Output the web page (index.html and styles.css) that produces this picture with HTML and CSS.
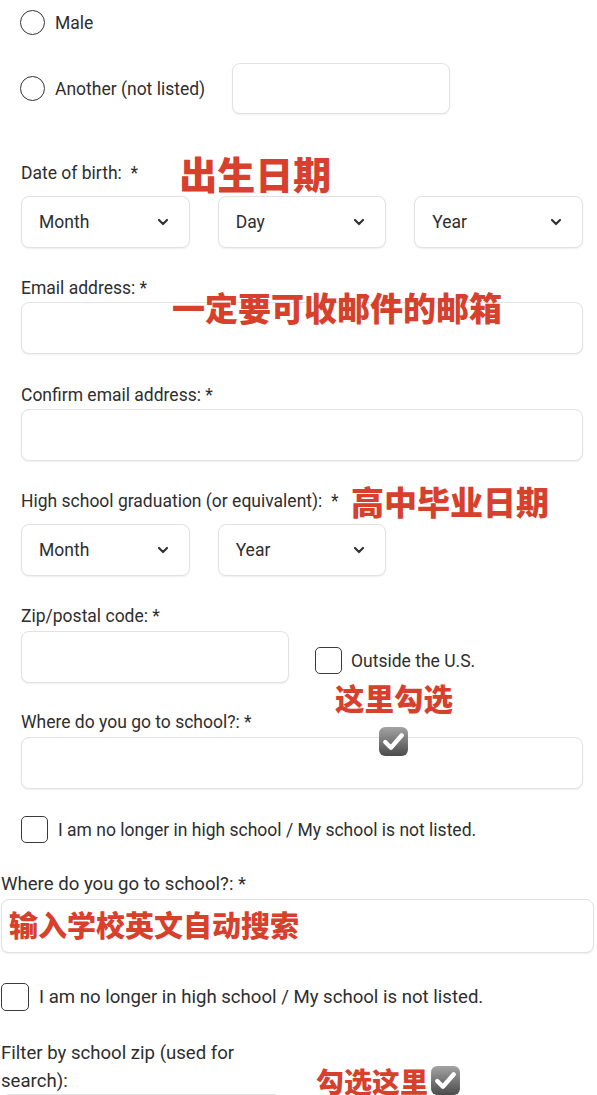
FILE: index.html
```html
<!DOCTYPE html>
<html lang="en">
<head>
  <meta charset="UTF-8" />
  <title>Student Sign Up</title>
  <link rel="stylesheet" href="styles.css">
</head>
<body>
  <!-- Top part of the form -->
  <div class="form">
    <div class="radio-row">
      <span class="radio"></span>
      <span>Male</span>
    </div>
    <div class="radio-row other">
      <span class="radio"></span>
      <span>Another (not listed)</span>
      <div class="box other-input"></div>
    </div>

    <div class="label tall">Date of birth:&nbsp; * <span class="note note-dob">出生日期</span></div>
    <div class="select-row">
      <div class="box select"><span>Month</span><svg class="chev" viewBox="0 0 12 8"><polyline points="2,2 6,6 10,2" /></svg></div>
      <div class="box select"><span>Day</span><svg class="chev" viewBox="0 0 12 8"><polyline points="2,2 6,6 10,2" /></svg></div>
      <div class="box select"><span>Year</span><svg class="chev" viewBox="0 0 12 8"><polyline points="2,2 6,6 10,2" /></svg></div>
    </div>

    <div class="field email">
      <div class="label">Email address: *</div>
      <span class="note note-email">一定要可收邮件的邮箱</span>
      <div class="box input"></div>
    </div>

    <div class="field confirm">
      <div class="label">Confirm email address: *</div>
      <div class="box input"></div>
    </div>

    <div class="label tall hs">High school graduation (or equivalent):&nbsp; * <span class="note note-hs">高中毕业日期</span></div>
    <div class="select-row">
      <div class="box select"><span>Month</span><svg class="chev" viewBox="0 0 12 8"><polyline points="2,2 6,6 10,2" /></svg></div>
      <div class="box select"><span>Year</span><svg class="chev" viewBox="0 0 12 8"><polyline points="2,2 6,6 10,2" /></svg></div>
    </div>

    <div class="field zip">
      <div class="label">Zip/postal code: *</div>
      <div class="zip-row">
        <div class="box input zip-input"></div>
        <label class="check-row outside"><span class="check"></span><span>Outside the U.S.</span></label>
        <span class="note note-here">这里勾选</span>
      </div>
    </div>

    <div class="field school">
      <div class="label">Where do you go to school?: *</div>
      <svg class="checked checked-school" viewBox="0 0 30 30"><use href="#tick" /></svg>
      <div class="box input"></div>
    </div>

    <label class="check-row not-listed"><span class="check"></span><span>I am no longer in high school / My school is not listed.</span></label>
  </div>

  <!-- Bottom part of the form -->
  <div class="form lower">
    <div class="field">
      <div class="label">Where do you go to school?: *</div>
      <div class="box input search"><span class="note note-search">输入学校英文自动搜索</span></div>
    </div>

    <label class="check-row not-listed"><span class="check"></span><span>I am no longer in high school / My school is not listed.</span></label>

    <div class="field filter">
      <div class="label wrap">Filter by school zip (used for search):</div>
      <div class="note-pick"><span class="note">勾选这里</span><svg class="checked" viewBox="0 0 30 30"><use href="#tick" /></svg></div>
      <div class="box input filter-input"></div>
    </div>
  </div>

  <svg width="0" height="0" class="defs">
    <defs>
      <linearGradient id="grey" x1="0" y1="0" x2="0" y2="1">
        <stop offset="0" stop-color="#a3a3a3" />
        <stop offset="1" stop-color="#4b4b4b" />
      </linearGradient>
      <g id="tick">
        <rect x="1" y="1" width="28" height="28" rx="6" fill="url(#grey)" />
        <path d="M7 15.5 L12.5 21 L23 9" fill="none" stroke="#fff" stroke-width="4.2" stroke-linecap="round" stroke-linejoin="round" />
      </g>
    </defs>
  </svg>
</body>
</html>
```

FILE: styles.css
```css
html, body {
  height: 1095px;
  overflow: hidden;
}

body {
  margin: 0;
  background: #fff;
  color: #2e2e2e;
  font-family: Roboto, "Liberation Sans", sans-serif;
  font-size: 17.5px;
}

.form {
  padding: 0 14px 0 21px;
}

.box {
  box-sizing: border-box;
  border: 1px solid #e2e2e2;
  border-radius: 8px;
  background: #fff;
  box-shadow: 0 1px 2px rgba(0,0,0,0.07);
}

/* radios */
.radio-row {
  display: flex;
  align-items: center;
  height: 45px;
}

.radio-row.other {
  margin-top: 18px;
  height: 51px;
}

.radio {
  box-sizing: border-box;
  width: 25px;
  height: 25px;
  border: 1.5px solid #333;
  border-radius: 50%;
  margin-left: -1px;
  margin-right: 10px;
}

.other-input {
  width: 218px;
  height: 51px;
  margin-left: 27px;
}

/* labels */
.label {
  line-height: 24px;
}

.label.tall {
  line-height: 38px;
  height: 38px;
  margin-top: 40px;
}

.label.hs {
  margin-top: 21px;
}

.note {
  color: #d6402c;
  font-family: "Noto Sans CJK SC", sans-serif;
  font-weight: 900;
  white-space: nowrap;
}

.note-dob {
  font-size: 38px;
  margin-left: 37px;
  vertical-align: top;
}

.note-hs {
  font-size: 33px;
  margin-left: 8px;
  vertical-align: top;
}

/* selects */
.select-row {
  display: grid;
  grid-template-columns: repeat(3, 1fr);
  gap: 28px;
  margin-top: 4px;
}

.select {
  height: 52px;
  display: flex;
  align-items: center;
  justify-content: space-between;
  padding: 0 20px 0 17px;
  font-size: 17.5px;
}

.chev {
  width: 12px;
  height: 8px;
  fill: none;
  stroke: #333;
  stroke-width: 2.2;
  stroke-linecap: round;
  stroke-linejoin: round;
}

/* text inputs */
.field {
  position: relative;
  margin-top: 28px;
}

.field.confirm {
  margin-top: 29px;
}

.input {
  height: 52px;
  margin-top: 2px;
}

.note-email {
  position: absolute;
  left: 151px;
  top: 12px;
  font-size: 33px;
  line-height: 38px;
}

.zip-row {
  position: relative;
  display: flex;
  align-items: flex-start;
  margin-top: 3px;
}

.zip-row .input {
  margin-top: 0;
}

.zip-input {
  width: 268px;
}

.note-here {
  position: absolute;
  left: 314px;
  top: 51px;
  font-size: 29.5px;
  line-height: 30px;
}

.field.school {
  margin-top: 27px;
}

.field.school .input {
  margin-top: 3px;
}

.checked {
  width: 31px;
  height: 31px;
  display: block;
}

.checked-school {
  position: absolute;
  left: 357px;
  top: 16px;
  z-index: 1;
}

/* checkboxes */
.check-row {
  display: flex;
  align-items: center;
  gap: 10px;
}

.check {
  box-sizing: border-box;
  width: 27px;
  height: 27px;
  border: 1.5px solid #3a3a3a;
  border-radius: 5px;
  flex-shrink: 0;
}

.outside {
  margin-left: 26px;
  margin-top: 16px;
  gap: 9px;
}

.not-listed {
  margin-top: 27px;
}

/* lower part */
.form.lower {
  padding: 0 3px 0 1px;
  font-size: 18.6px;
}

.lower .label {
  line-height: 26px;
}

.lower .field {
  margin-top: 28px;
}

.search {
  height: 54px;
  display: flex;
  align-items: center;
  padding: 0 0 4px 7px;
}

.note-search {
  font-size: 29px;
  line-height: 34px;
}

.lower .not-listed {
  margin-top: 30px;
}

.lower .check {
  width: 28px;
  height: 28px;
}

.lower .field.filter {
  margin-top: 28px;
}

.label.wrap {
  width: 262px;
  line-height: 28px;
}

.note-pick {
  position: absolute;
  left: 315px;
  top: 26px;
  display: flex;
  align-items: center;
  gap: 2px;
}

.note-pick .note {
  font-size: 28px;
  line-height: 30px;
}

.filter-input {
  width: 280px;
  margin-top: -1px;
}

.defs {
  position: absolute;
}
```
